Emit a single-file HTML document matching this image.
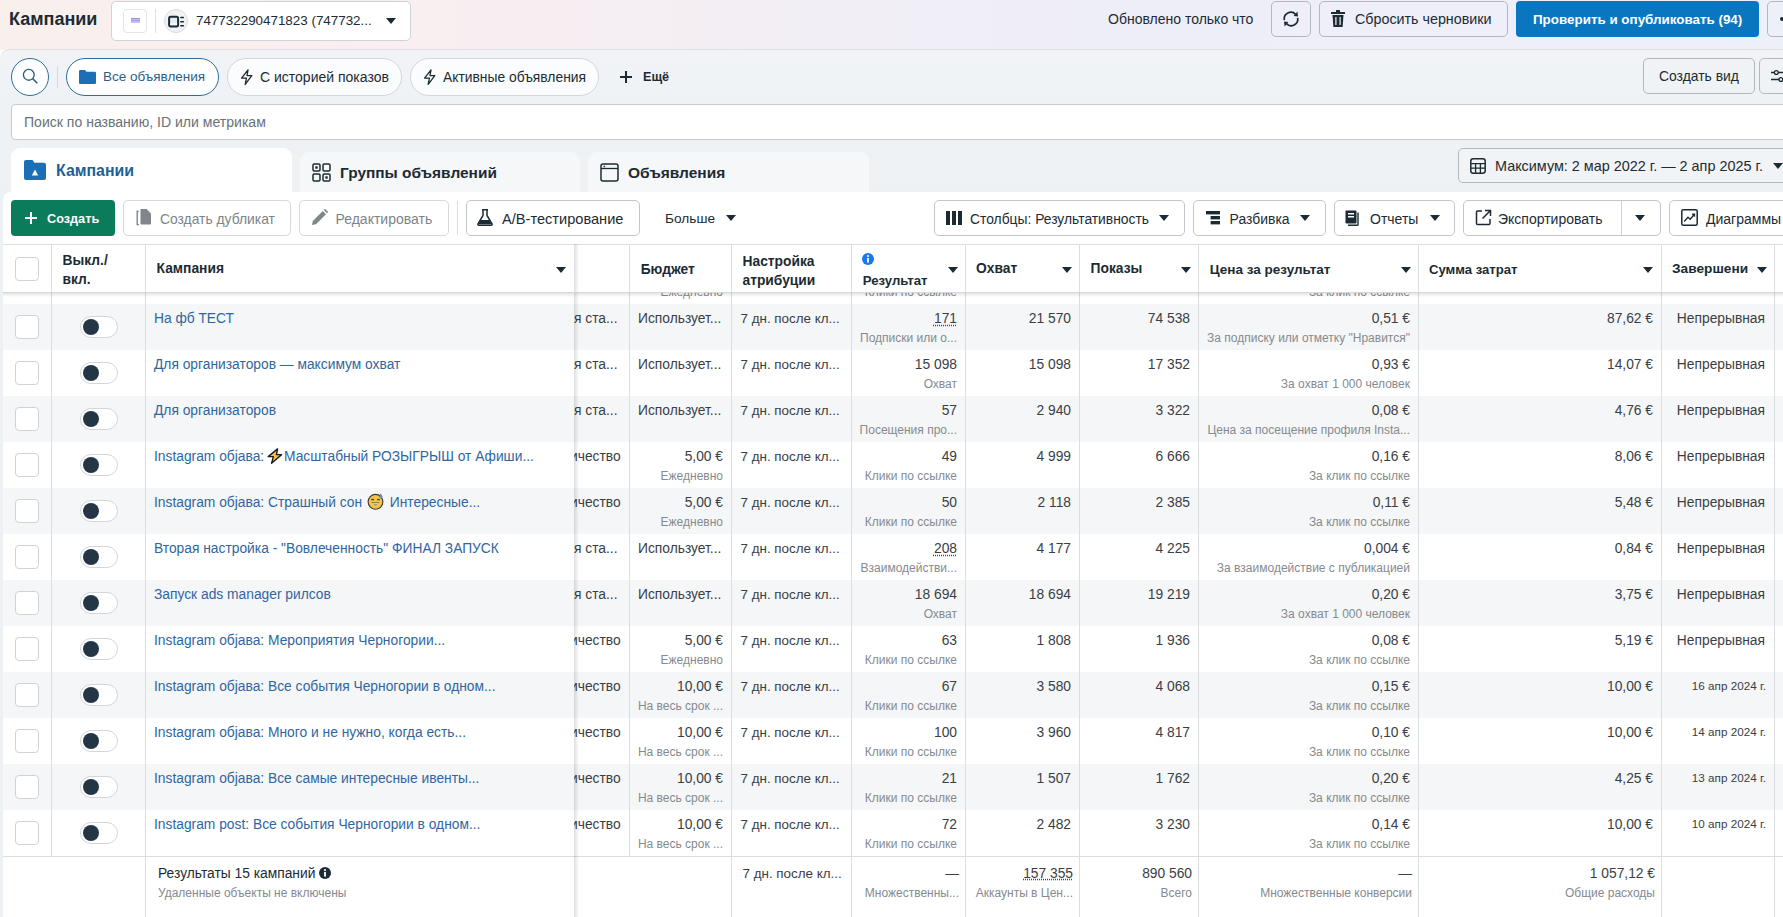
<!DOCTYPE html><html><head><meta charset="utf-8"><style>
*{box-sizing:border-box;margin:0;padding:0}
html,body{width:1783px;height:917px;overflow:hidden;background:#fff;font-family:"Liberation Sans",sans-serif;color:#1c2b33}
.abs{position:absolute}
.t{position:absolute;white-space:nowrap;line-height:16px}
.btn{position:absolute;border:1px solid #c2c6cc;border-radius:5px;background:#fff}
.tbtn{position:absolute;border:1px solid #b3b8bf;border-radius:5px;background:transparent}
.pill{position:absolute;border:1px solid #d3d7dc;border-radius:19px;background:#fbfcfd}
.caret{position:absolute;width:0;height:0;border-left:5px solid transparent;border-right:5px solid transparent;border-top:6px solid #1c2b33}
.cell{position:absolute;white-space:nowrap;overflow:hidden;font-size:14px;line-height:16px;color:#444950}
.sub{font-size:12px;color:#7b8287}
.vl{position:absolute;width:1px;background:#dadde1}
.hl{position:absolute;height:1px;background:#dadde1}
.lnk{color:#2f67a6}
</style></head><body>
<div class="abs" style="left:0;top:0;width:1783px;height:50px;background:linear-gradient(90deg,#f8f0ed 0%,#f9eef0 24%,#f2eef5 45%,#eeeef9 62%,#eef0f8 100%)"></div>
<div class="t" style="left:9px;top:9px;font-size:18px;line-height:20px;font-weight:700;color:#1c2b33">Кампании</div>
<div class="abs" style="left:111px;top:1px;width:300px;height:40px;border:1px solid #cfd3d8;border-radius:5px;background:#fff"></div>
<div class="abs" style="left:123px;top:9px;width:24px;height:24px;border:1px solid #e3e5e8;border-radius:4px;background:#fff"></div>
<div class="abs" style="left:130.6px;top:18px;width:9px;height:5.4px;background:#c7bdf3;border-top:1px solid #9a90d6"></div><div class="abs" style="left:130.6px;top:20.4px;width:9px;height:0.8px;background:#a79de0"></div>
<div class="abs" style="left:155px;top:9px;width:1px;height:24px;background:#dfe1e4"></div>
<div class="abs" style="left:164px;top:9px;width:23.5px;height:23.5px;border-radius:12px;background:#f0f2f5;border:1px solid #d9dce0"></div>
<svg class="abs" style="left:167px;top:15px" width="18" height="13" viewBox="0 0 18 13"><rect x="2.1" y="1.8" width="9" height="9.6" rx="1.6" fill="#e6ebf2" stroke="#1c2b33" stroke-width="2"/><rect x="3" y="8.6" width="7.2" height="1" fill="#fff"/><rect x="13.1" y="1.8" width="4" height="1.5" rx="0.7" fill="#1c2b33"/><rect x="13.1" y="5.9" width="4" height="1.5" rx="0.7" fill="#1c2b33"/><rect x="13.1" y="9.9" width="4" height="1.5" rx="0.7" fill="#1c2b33"/></svg>
<div class="t" style="left:196px;top:13px;font-size:13.4px;color:#1c2b33">747732290471823 (747732...</div>
<div class="caret" style="left:386px;top:18px"></div>
<div class="t" style="left:1108px;top:11px;font-size:14px;color:#1c2b33">Обновлено только что</div>
<div class="tbtn" style="left:1271px;top:1px;width:40px;height:36px"></div>
<svg class="abs" style="left:1282px;top:10px" width="18" height="18" viewBox="0 0 18 18"><path d="M2.4 10.2A6.6 6.6 0 0 1 13.6 4.3M15.6 7.8A6.6 6.6 0 0 1 4.4 13.7" fill="none" stroke="#1c2b33" stroke-width="1.7"/><path d="M11.6 6L16 6.6L15.4 1.6Z" fill="#1c2b33"/><path d="M6.4 12L2 11.4L2.6 16.4Z" fill="#1c2b33"/></svg>
<div class="tbtn" style="left:1319px;top:1px;width:189px;height:36px"></div>
<svg class="abs" style="left:1331px;top:10px" width="14" height="17" viewBox="0 0 14 17"><rect x="0" y="2" width="14" height="2" fill="#1c2b33"/><rect x="5" y="0" width="4" height="2" fill="#1c2b33"/><path d="M1.5 5H12.5L11.6 17H2.4Z" fill="#1c2b33"/><rect x="4.3" y="7" width="1.2" height="8" fill="#f5f6f8"/><rect x="8.5" y="7" width="1.2" height="8" fill="#f5f6f8"/></svg>
<div class="t" style="left:1355px;top:11px;font-size:14.3px;color:#1c2b33">Сбросить черновики</div>
<div class="abs" style="left:1516px;top:1px;width:243px;height:36px;border-radius:4px;background:#0a76c0"></div>
<div class="t" style="left:1533px;top:12px;font-size:13.4px;font-weight:700;color:#fff">Проверить и опубликовать (94)</div>
<div class="tbtn" style="left:1767px;top:1px;width:40px;height:36px"></div>
<div class="abs" style="left:1779.5px;top:17px;width:4px;height:4px;border-radius:2px;background:#1c2b33"></div>
<div class="abs" style="left:0;top:49px;width:1800px;height:900px;background:linear-gradient(180deg,#f1f3f7 0px,#eef2f5 60px,#eef1f4 200px);border-top:1px solid #dcdfe4;border-top-left-radius:10px"></div>
<div class="abs" style="left:11px;top:58px;width:38px;height:38px;border:1.5px solid #2b6e9e;border-radius:50%;background:#fff"></div>
<svg class="abs" style="left:21px;top:67px" width="19" height="19" viewBox="0 0 19 19"><circle cx="7.8" cy="7.8" r="5.4" fill="none" stroke="#2a5c80" stroke-width="1.35"/><path d="M11.8 11.8L15.8 15.8" stroke="#2a5c80" stroke-width="1.6" stroke-linecap="round"/></svg>
<div class="abs" style="left:57px;top:66px;width:1px;height:22px;background:#d6dade"></div>
<div class="pill" style="left:66px;top:58px;width:153px;height:38px;border:1.5px solid #2b6e9e;background:#fff"></div>
<svg class="abs" style="left:79px;top:70px" width="17" height="14" viewBox="0 0 17 14"><path d="M0 1.2Q0 0 1.2 0H6L7.6 1.8H15.8Q17 1.8 17 3V12.8Q17 14 15.8 14H1.2Q0 14 0 12.8Z" fill="#1a6fb5"/></svg>
<div class="t" style="left:103px;top:69px;font-size:13.5px;color:#2b5f8a">Все объявления</div>
<div class="pill" style="left:227px;top:58px;width:175px;height:38px"></div>
<svg class="abs" style="left:240px;top:69px" width="13" height="16" viewBox="0 0 13 16"><path d="M8 0.8L1.6 9.2H6.4L5.2 15.4L11.8 6.6H7L8 0.8Z" fill="none" stroke="#1c2b33" stroke-width="1.3" stroke-linejoin="round"/></svg>
<div class="t" style="left:260px;top:69px;font-size:14px;color:#1c2b33">С историей показов</div>
<div class="pill" style="left:410px;top:58px;width:189px;height:38px"></div>
<svg class="abs" style="left:423px;top:69px" width="13" height="16" viewBox="0 0 13 16"><path d="M8 0.8L1.6 9.2H6.4L5.2 15.4L11.8 6.6H7L8 0.8Z" fill="none" stroke="#1c2b33" stroke-width="1.3" stroke-linejoin="round"/></svg>
<div class="t" style="left:443px;top:69px;font-size:13.85px;color:#1c2b33">Активные объявления</div>
<div class="abs" style="left:620px;top:76px;width:12px;height:1.6px;background:#1c2b33"></div><div class="abs" style="left:625.2px;top:70.8px;width:1.6px;height:12px;background:#1c2b33"></div>
<div class="t" style="left:643px;top:69px;font-size:12.6px;font-weight:700;color:#1c2b33">Ещё</div>
<div class="tbtn" style="left:1643px;top:58px;width:112px;height:36px"></div>
<div class="t" style="left:1659px;top:68px;font-size:13.9px;color:#1c2b33">Создать вид</div>
<div class="tbtn" style="left:1759px;top:58px;width:40px;height:36px"></div>
<svg class="abs" style="left:1770px;top:67px" width="16" height="16" viewBox="0 0 16 16"><path d="M1 5.5H4.4M8.2 5.5H16M1 12.5H9M12.8 12.5H16" stroke="#1c2b33" stroke-width="1.3"/><circle cx="6.3" cy="5.5" r="1.9" fill="none" stroke="#1c2b33" stroke-width="1.3"/><circle cx="10.9" cy="12.5" r="1.9" fill="none" stroke="#1c2b33" stroke-width="1.3"/></svg>
<div class="abs" style="left:11px;top:104px;width:1790px;height:36px;border:1px solid #c7cbd0;border-radius:4px;background:#fff"></div>
<div class="t" style="left:24px;top:114px;font-size:14.05px;color:#6a7177">Поиск по названию, ID или метрикам</div>
<div class="abs" style="left:11px;top:148px;width:281px;height:50px;border-radius:9px 9px 0 0;background:#fff"></div>
<svg class="abs" style="left:24px;top:160px" width="22" height="20" viewBox="0 0 22 20"><path d="M0 2Q0 0 2 0H8.5L10.5 2.8H20Q22 2.8 22 4.8V18Q22 20 20 20H2Q0 20 0 18Z" fill="#1a6fb5"/><path d="M11 9.5L14.2 15.5H7.8Z" fill="#fff"/></svg>
<div class="t" style="left:56px;top:162px;font-size:15.9px;line-height:18px;font-weight:700;color:#1f5f96">Кампании</div>
<div class="abs" style="left:300px;top:152px;width:280px;height:46px;border-radius:9px 9px 0 0;background:#f6f7f9"></div>
<svg class="abs" style="left:312px;top:163px" width="19" height="19" viewBox="0 0 19 19"><rect x="1" y="1" width="7" height="7" rx="1.2" fill="none" stroke="#1c2b33" stroke-width="1.5"/><rect x="11" y="1" width="7" height="7" rx="1.2" fill="none" stroke="#1c2b33" stroke-width="1.5"/><rect x="1" y="11" width="7" height="7" rx="1.2" fill="none" stroke="#1c2b33" stroke-width="1.5"/><rect x="11" y="11" width="7" height="7" rx="1.2" fill="none" stroke="#1c2b33" stroke-width="1.5"/><rect x="3.3" y="3.3" width="2.4" height="2.4" fill="#1c2b33"/><rect x="13.3" y="13.3" width="2.4" height="2.4" fill="#1c2b33"/></svg>
<div class="t" style="left:340px;top:164px;font-size:15.45px;line-height:18px;font-weight:700;color:#1c2b33">Группы объявлений</div>
<div class="abs" style="left:588px;top:152px;width:281px;height:46px;border-radius:9px 9px 0 0;background:#f6f7f9"></div>
<svg class="abs" style="left:600px;top:163px" width="19" height="19" viewBox="0 0 19 19"><rect x="1" y="1" width="17" height="17" rx="2" fill="none" stroke="#1c2b33" stroke-width="1.5"/><path d="M1 5.5H18" stroke="#1c2b33" stroke-width="1.3"/><rect x="3.5" y="2.8" width="1.6" height="1.4" fill="#1c2b33"/></svg>
<div class="t" style="left:628px;top:164px;font-size:15.5px;line-height:18px;font-weight:700;color:#1c2b33">Объявления</div>
<div class="abs" style="left:1458px;top:148px;width:340px;height:35px;border:1px solid #b3b8bf;border-radius:5px;background:#f1f3f6"></div>
<svg class="abs" style="left:1470px;top:158px" width="16" height="16" viewBox="0 0 16 16"><rect x="0.8" y="0.8" width="14.4" height="14.4" rx="2.4" fill="none" stroke="#1c2b33" stroke-width="1.5"/><path d="M0.8 5.6H15.2M0.8 10.2H15.2M5.6 5.6V15M10.4 5.6V15" stroke="#1c2b33" stroke-width="1.3"/></svg>
<div class="t" style="left:1495px;top:158px;font-size:14.4px;color:#1c2b33">Максимум: 2 мар 2022 г. — 2 апр 2025 г.</div>
<div class="caret" style="left:1773px;top:163px"></div>
<div class="abs" style="left:3px;top:192px;width:1800px;height:730px;background:#fff;border-top-left-radius:8px"></div>
<div class="abs" style="left:11px;top:200px;width:104px;height:36px;border-radius:4px;background:#0b7c5b"></div>
<div class="abs" style="left:25px;top:217px;width:12px;height:1.8px;background:#fff"></div><div class="abs" style="left:30.1px;top:212px;width:1.8px;height:12px;background:#fff"></div>
<div class="t" style="left:47px;top:210.5px;font-size:12.7px;font-weight:700;color:#fff">Создать</div>
<div class="btn" style="left:123px;top:200px;width:168px;height:36px;border-color:#d5d9de"></div>
<svg class="abs" style="left:135px;top:209px" width="18" height="17" viewBox="0 0 18 17"><path d="M3.6 2.2H2.2V15.6H4" fill="none" stroke="#80868b" stroke-width="1.4"/><path d="M5.5 0H11.5L16 4.5V14.5Q16 15.5 15 15.5H6.5Q5.5 15.5 5.5 14.5Z" fill="#80868b"/></svg>
<div class="t" style="left:160px;top:210.5px;font-size:13.86px;color:#7d8489">Создать дубликат</div>
<div class="btn" style="left:299px;top:200px;width:150px;height:36px;border-color:#d5d9de"></div>
<svg class="abs" style="left:311px;top:209px" width="17" height="17" viewBox="0 0 17 17"><path d="M1 16L1.8 12L11.8 2L15 5.2L5 15.2Z" fill="#80868b"/><path d="M12.8 1L14 -0.2L17.2 3L16 4.2Z" fill="#80868b"/></svg>
<div class="t" style="left:335.5px;top:210.5px;font-size:14px;color:#7d8489">Редактировать</div>
<div class="abs" style="left:457px;top:201px;width:1px;height:34px;background:#dadde1"></div>
<div class="btn" style="left:466px;top:200px;width:174px;height:36px"></div>
<svg class="abs" style="left:477px;top:209px" width="16" height="17" viewBox="0 0 16 17"><path d="M5 0.8H11M6 1V6.5L1 14.8Q0.5 16.2 2 16.2H14Q15.5 16.2 15 14.8L10 6.5V1" fill="none" stroke="#1c2b33" stroke-width="1.5"/><path d="M3.6 11H12.4L14.6 15.2H1.4Z" fill="#1c2b33"/></svg>
<div class="t" style="left:502px;top:210.5px;font-size:14.6px;color:#1c2b33">A/B-тестирование</div>
<div class="t" style="left:665px;top:210.5px;font-size:13.7px;color:#1c2b33">Больше</div>
<div class="caret" style="left:726px;top:215px"></div>
<div class="btn" style="left:934px;top:200px;width:251px;height:36px"></div>
<div class="t" style="left:970px;top:210.5px;font-size:13.85px;color:#1c2b33">Столбцы: Результативность</div>
<div class="caret" style="left:1159px;top:215px"></div>
<svg class="abs" style="left:946px;top:211px" width="16" height="14" viewBox="0 0 16 14"><rect x="0" y="0" width="4" height="14" fill="#1c2b33"/><rect x="6" y="0" width="4" height="14" fill="#1c2b33"/><rect x="12" y="0" width="4" height="14" fill="#1c2b33"/></svg>
<div class="btn" style="left:1193px;top:200px;width:133px;height:36px"></div>
<div class="t" style="left:1229.6px;top:210.5px;font-size:13.95px;color:#1c2b33">Разбивка</div>
<div class="caret" style="left:1300px;top:215px"></div>
<svg class="abs" style="left:1206px;top:211px" width="15" height="14" viewBox="0 0 15 14"><rect x="0" y="0" width="14" height="3.4" fill="#1c2b33"/><rect x="4.6" y="5" width="9.4" height="3.4" fill="#1c2b33"/><rect x="4.6" y="10" width="9.4" height="3.4" fill="#1c2b33"/></svg>
<div class="btn" style="left:1334px;top:200px;width:121px;height:36px"></div>
<div class="t" style="left:1370px;top:210.5px;font-size:14px;color:#1c2b33">Отчеты</div>
<div class="caret" style="left:1430px;top:215px"></div>
<svg class="abs" style="left:1345px;top:210px" width="16" height="16" viewBox="0 0 16 16"><rect x="0.5" y="0.5" width="11" height="13" rx="1" fill="#1c2b33"/><rect x="3" y="3" width="6" height="1.5" fill="#fff"/><rect x="3" y="6" width="6" height="1.5" fill="#fff"/><path d="M13 2.5V14.5Q13 15.3 12.2 15.3H3" fill="none" stroke="#1c2b33" stroke-width="1.4"/></svg>
<div class="btn" style="left:1463px;top:200px;width:198px;height:36px"></div>
<div class="t" style="left:1498px;top:210.5px;font-size:14px;color:#1c2b33">Экспортировать</div>
<div class="abs" style="left:1621px;top:201px;width:1px;height:34px;background:#cbd2d9"></div>
<div class="caret" style="left:1635px;top:215px"></div>
<svg class="abs" style="left:1475px;top:209px" width="17" height="17" viewBox="0 0 17 17"><path d="M7 2H2.5Q1.5 2 1.5 3V14.5Q1.5 15.5 2.5 15.5H14Q15 15.5 15 14.5V10" fill="none" stroke="#1c2b33" stroke-width="1.5"/><path d="M7.5 9.5L15 2M10 1.5H15.5V7" fill="none" stroke="#1c2b33" stroke-width="1.5"/></svg>
<div class="btn" style="left:1669px;top:200px;width:140px;height:36px"></div>
<div class="t" style="left:1706px;top:210.5px;font-size:14px;color:#1c2b33">Диаграммы</div>
<svg class="abs" style="left:1681px;top:209px" width="17" height="17" viewBox="0 0 17 17"><rect x="0.8" y="0.8" width="15.4" height="15.4" rx="1.5" fill="none" stroke="#1c2b33" stroke-width="1.5"/><path d="M3.2 12.5L7 8.2L9.2 10.2L13.2 5.5M11 5.2H13.5V7.7" fill="none" stroke="#1c2b33" stroke-width="1.3"/></svg>
<div class="abs" style="left:3px;top:257.9px;width:1800px;height:46px;background:#fff"></div>
<div class="abs" style="left:3px;top:303.9px;width:1800px;height:46px;background:#f5f6f7"></div>
<div class="abs" style="left:3px;top:349.9px;width:1800px;height:46px;background:#fff"></div>
<div class="abs" style="left:3px;top:395.9px;width:1800px;height:46px;background:#f5f6f7"></div>
<div class="abs" style="left:3px;top:441.9px;width:1800px;height:46px;background:#fff"></div>
<div class="abs" style="left:3px;top:487.9px;width:1800px;height:46px;background:#f5f6f7"></div>
<div class="abs" style="left:3px;top:533.9px;width:1800px;height:46px;background:#fff"></div>
<div class="abs" style="left:3px;top:579.9px;width:1800px;height:46px;background:#f5f6f7"></div>
<div class="abs" style="left:3px;top:625.9px;width:1800px;height:46px;background:#fff"></div>
<div class="abs" style="left:3px;top:671.9px;width:1800px;height:46px;background:#f5f6f7"></div>
<div class="abs" style="left:3px;top:717.9px;width:1800px;height:46px;background:#fff"></div>
<div class="abs" style="left:3px;top:763.9px;width:1800px;height:46px;background:#f5f6f7"></div>
<div class="abs" style="left:3px;top:809.9px;width:1800px;height:46px;background:#fff"></div>
<div class="t" style="left:570px;top:265.34px;font-size:13.8px;color:#3a3e44;font-weight:400;">ичество</div>
<div class="t" style="right:1060px;top:265.34px;font-size:13.8px;color:#3a3e44;font-weight:400;">5,00 €</div>
<div class="t" style="right:1060px;top:284.33px;font-size:12px;color:#858a8f;font-weight:400;">Ежедневно</div>
<div class="t" style="left:740.5px;top:265.47px;font-size:13.4px;color:#3a3e44;font-weight:400;">7 дн. после кл...</div>
<div class="t" style="right:826px;top:265.34px;font-size:13.8px;color:#3a3e44;font-weight:400;">49</div>
<div class="t" style="right:826px;top:284.33px;font-size:12px;color:#858a8f;font-weight:400;">Клики по ссылке</div>
<div class="t" style="right:712px;top:265.34px;font-size:13.8px;color:#3a3e44;font-weight:400;"></div>
<div class="t" style="right:593px;top:265.34px;font-size:13.8px;color:#3a3e44;font-weight:400;"></div>
<div class="t" style="right:373px;top:265.34px;font-size:13.8px;color:#3a3e44;font-weight:400;"></div>
<div class="t" style="right:373px;top:284.33px;font-size:12px;color:#858a8f;font-weight:400;">За клик по ссылке</div>
<div class="t" style="right:130px;top:265.34px;font-size:13.8px;color:#3a3e44;font-weight:400;"></div>
<div class="t" style="right:18px;top:265.34px;font-size:13.8px;color:#3a3e44;font-weight:400;"></div>
<div class="t" style="left:574px;top:311.34px;font-size:13.8px;color:#3a3e44;font-weight:400;">я ста...</div>
<div class="t" style="left:638px;top:311.34px;font-size:13.8px;color:#3a3e44;font-weight:400;">Использует...</div>
<div class="t" style="left:740.5px;top:311.47px;font-size:13.4px;color:#3a3e44;font-weight:400;">7 дн. после кл...</div>
<div class="t" style="right:826px;top:311.34px;font-size:13.8px;color:#3a3e44;font-weight:400;text-decoration:underline dotted #444950;text-underline-offset:1px">171</div>
<div class="t" style="right:826px;top:330.33px;font-size:12px;color:#858a8f;font-weight:400;">Подписки или о...</div>
<div class="t" style="right:712px;top:311.34px;font-size:13.8px;color:#3a3e44;font-weight:400;">21 570</div>
<div class="t" style="right:593px;top:311.34px;font-size:13.8px;color:#3a3e44;font-weight:400;">74 538</div>
<div class="t" style="right:373px;top:311.34px;font-size:13.8px;color:#3a3e44;font-weight:400;">0,51 €</div>
<div class="t" style="right:373px;top:330.33px;font-size:12px;color:#858a8f;font-weight:400;">За подписку или отметку "Нравится"</div>
<div class="t" style="right:130px;top:311.34px;font-size:13.8px;color:#3a3e44;font-weight:400;">87,62 €</div>
<div class="t" style="right:18px;top:311.34px;font-size:13.8px;color:#3a3e44;font-weight:400;">Непрерывная</div>
<div class="t" style="left:574px;top:357.34px;font-size:13.8px;color:#3a3e44;font-weight:400;">я ста...</div>
<div class="t" style="left:638px;top:357.34px;font-size:13.8px;color:#3a3e44;font-weight:400;">Использует...</div>
<div class="t" style="left:740.5px;top:357.47px;font-size:13.4px;color:#3a3e44;font-weight:400;">7 дн. после кл...</div>
<div class="t" style="right:826px;top:357.34px;font-size:13.8px;color:#3a3e44;font-weight:400;">15 098</div>
<div class="t" style="right:826px;top:376.33px;font-size:12px;color:#858a8f;font-weight:400;">Охват</div>
<div class="t" style="right:712px;top:357.34px;font-size:13.8px;color:#3a3e44;font-weight:400;">15 098</div>
<div class="t" style="right:593px;top:357.34px;font-size:13.8px;color:#3a3e44;font-weight:400;">17 352</div>
<div class="t" style="right:373px;top:357.34px;font-size:13.8px;color:#3a3e44;font-weight:400;">0,93 €</div>
<div class="t" style="right:373px;top:376.33px;font-size:12px;color:#858a8f;font-weight:400;">За охват 1 000 человек</div>
<div class="t" style="right:130px;top:357.34px;font-size:13.8px;color:#3a3e44;font-weight:400;">14,07 €</div>
<div class="t" style="right:18px;top:357.34px;font-size:13.8px;color:#3a3e44;font-weight:400;">Непрерывная</div>
<div class="t" style="left:574px;top:403.34px;font-size:13.8px;color:#3a3e44;font-weight:400;">я ста...</div>
<div class="t" style="left:638px;top:403.34px;font-size:13.8px;color:#3a3e44;font-weight:400;">Использует...</div>
<div class="t" style="left:740.5px;top:403.47px;font-size:13.4px;color:#3a3e44;font-weight:400;">7 дн. после кл...</div>
<div class="t" style="right:826px;top:403.34px;font-size:13.8px;color:#3a3e44;font-weight:400;">57</div>
<div class="t" style="right:826px;top:422.33px;font-size:12px;color:#858a8f;font-weight:400;">Посещения про...</div>
<div class="t" style="right:712px;top:403.34px;font-size:13.8px;color:#3a3e44;font-weight:400;">2 940</div>
<div class="t" style="right:593px;top:403.34px;font-size:13.8px;color:#3a3e44;font-weight:400;">3 322</div>
<div class="t" style="right:373px;top:403.34px;font-size:13.8px;color:#3a3e44;font-weight:400;">0,08 €</div>
<div class="t" style="right:373px;top:422.33px;font-size:12px;color:#858a8f;font-weight:400;">Цена за посещение профиля Insta...</div>
<div class="t" style="right:130px;top:403.34px;font-size:13.8px;color:#3a3e44;font-weight:400;">4,76 €</div>
<div class="t" style="right:18px;top:403.34px;font-size:13.8px;color:#3a3e44;font-weight:400;">Непрерывная</div>
<div class="t" style="left:570px;top:449.34px;font-size:13.8px;color:#3a3e44;font-weight:400;">ичество</div>
<div class="t" style="right:1060px;top:449.34px;font-size:13.8px;color:#3a3e44;font-weight:400;">5,00 €</div>
<div class="t" style="right:1060px;top:468.33px;font-size:12px;color:#858a8f;font-weight:400;">Ежедневно</div>
<div class="t" style="left:740.5px;top:449.47px;font-size:13.4px;color:#3a3e44;font-weight:400;">7 дн. после кл...</div>
<div class="t" style="right:826px;top:449.34px;font-size:13.8px;color:#3a3e44;font-weight:400;">49</div>
<div class="t" style="right:826px;top:468.33px;font-size:12px;color:#858a8f;font-weight:400;">Клики по ссылке</div>
<div class="t" style="right:712px;top:449.34px;font-size:13.8px;color:#3a3e44;font-weight:400;">4 999</div>
<div class="t" style="right:593px;top:449.34px;font-size:13.8px;color:#3a3e44;font-weight:400;">6 666</div>
<div class="t" style="right:373px;top:449.34px;font-size:13.8px;color:#3a3e44;font-weight:400;">0,16 €</div>
<div class="t" style="right:373px;top:468.33px;font-size:12px;color:#858a8f;font-weight:400;">За клик по ссылке</div>
<div class="t" style="right:130px;top:449.34px;font-size:13.8px;color:#3a3e44;font-weight:400;">8,06 €</div>
<div class="t" style="right:18px;top:449.34px;font-size:13.8px;color:#3a3e44;font-weight:400;">Непрерывная</div>
<div class="t" style="left:570px;top:495.34px;font-size:13.8px;color:#3a3e44;font-weight:400;">ичество</div>
<div class="t" style="right:1060px;top:495.34px;font-size:13.8px;color:#3a3e44;font-weight:400;">5,00 €</div>
<div class="t" style="right:1060px;top:514.33px;font-size:12px;color:#858a8f;font-weight:400;">Ежедневно</div>
<div class="t" style="left:740.5px;top:495.47px;font-size:13.4px;color:#3a3e44;font-weight:400;">7 дн. после кл...</div>
<div class="t" style="right:826px;top:495.34px;font-size:13.8px;color:#3a3e44;font-weight:400;">50</div>
<div class="t" style="right:826px;top:514.33px;font-size:12px;color:#858a8f;font-weight:400;">Клики по ссылке</div>
<div class="t" style="right:712px;top:495.34px;font-size:13.8px;color:#3a3e44;font-weight:400;">2 118</div>
<div class="t" style="right:593px;top:495.34px;font-size:13.8px;color:#3a3e44;font-weight:400;">2 385</div>
<div class="t" style="right:373px;top:495.34px;font-size:13.8px;color:#3a3e44;font-weight:400;">0,11 €</div>
<div class="t" style="right:373px;top:514.33px;font-size:12px;color:#858a8f;font-weight:400;">За клик по ссылке</div>
<div class="t" style="right:130px;top:495.34px;font-size:13.8px;color:#3a3e44;font-weight:400;">5,48 €</div>
<div class="t" style="right:18px;top:495.34px;font-size:13.8px;color:#3a3e44;font-weight:400;">Непрерывная</div>
<div class="t" style="left:574px;top:541.34px;font-size:13.8px;color:#3a3e44;font-weight:400;">я ста...</div>
<div class="t" style="left:638px;top:541.34px;font-size:13.8px;color:#3a3e44;font-weight:400;">Использует...</div>
<div class="t" style="left:740.5px;top:541.47px;font-size:13.4px;color:#3a3e44;font-weight:400;">7 дн. после кл...</div>
<div class="t" style="right:826px;top:541.34px;font-size:13.8px;color:#3a3e44;font-weight:400;text-decoration:underline dotted #444950;text-underline-offset:1px">208</div>
<div class="t" style="right:826px;top:560.33px;font-size:12px;color:#858a8f;font-weight:400;">Взаимодействи...</div>
<div class="t" style="right:712px;top:541.34px;font-size:13.8px;color:#3a3e44;font-weight:400;">4 177</div>
<div class="t" style="right:593px;top:541.34px;font-size:13.8px;color:#3a3e44;font-weight:400;">4 225</div>
<div class="t" style="right:373px;top:541.34px;font-size:13.8px;color:#3a3e44;font-weight:400;">0,004 €</div>
<div class="t" style="right:373px;top:560.33px;font-size:12px;color:#858a8f;font-weight:400;">За взаимодействие с публикацией</div>
<div class="t" style="right:130px;top:541.34px;font-size:13.8px;color:#3a3e44;font-weight:400;">0,84 €</div>
<div class="t" style="right:18px;top:541.34px;font-size:13.8px;color:#3a3e44;font-weight:400;">Непрерывная</div>
<div class="t" style="left:574px;top:587.34px;font-size:13.8px;color:#3a3e44;font-weight:400;">я ста...</div>
<div class="t" style="left:638px;top:587.34px;font-size:13.8px;color:#3a3e44;font-weight:400;">Использует...</div>
<div class="t" style="left:740.5px;top:587.47px;font-size:13.4px;color:#3a3e44;font-weight:400;">7 дн. после кл...</div>
<div class="t" style="right:826px;top:587.34px;font-size:13.8px;color:#3a3e44;font-weight:400;">18 694</div>
<div class="t" style="right:826px;top:606.33px;font-size:12px;color:#858a8f;font-weight:400;">Охват</div>
<div class="t" style="right:712px;top:587.34px;font-size:13.8px;color:#3a3e44;font-weight:400;">18 694</div>
<div class="t" style="right:593px;top:587.34px;font-size:13.8px;color:#3a3e44;font-weight:400;">19 219</div>
<div class="t" style="right:373px;top:587.34px;font-size:13.8px;color:#3a3e44;font-weight:400;">0,20 €</div>
<div class="t" style="right:373px;top:606.33px;font-size:12px;color:#858a8f;font-weight:400;">За охват 1 000 человек</div>
<div class="t" style="right:130px;top:587.34px;font-size:13.8px;color:#3a3e44;font-weight:400;">3,75 €</div>
<div class="t" style="right:18px;top:587.34px;font-size:13.8px;color:#3a3e44;font-weight:400;">Непрерывная</div>
<div class="t" style="left:570px;top:633.34px;font-size:13.8px;color:#3a3e44;font-weight:400;">ичество</div>
<div class="t" style="right:1060px;top:633.34px;font-size:13.8px;color:#3a3e44;font-weight:400;">5,00 €</div>
<div class="t" style="right:1060px;top:652.33px;font-size:12px;color:#858a8f;font-weight:400;">Ежедневно</div>
<div class="t" style="left:740.5px;top:633.47px;font-size:13.4px;color:#3a3e44;font-weight:400;">7 дн. после кл...</div>
<div class="t" style="right:826px;top:633.34px;font-size:13.8px;color:#3a3e44;font-weight:400;">63</div>
<div class="t" style="right:826px;top:652.33px;font-size:12px;color:#858a8f;font-weight:400;">Клики по ссылке</div>
<div class="t" style="right:712px;top:633.34px;font-size:13.8px;color:#3a3e44;font-weight:400;">1 808</div>
<div class="t" style="right:593px;top:633.34px;font-size:13.8px;color:#3a3e44;font-weight:400;">1 936</div>
<div class="t" style="right:373px;top:633.34px;font-size:13.8px;color:#3a3e44;font-weight:400;">0,08 €</div>
<div class="t" style="right:373px;top:652.33px;font-size:12px;color:#858a8f;font-weight:400;">За клик по ссылке</div>
<div class="t" style="right:130px;top:633.34px;font-size:13.8px;color:#3a3e44;font-weight:400;">5,19 €</div>
<div class="t" style="right:18px;top:633.34px;font-size:13.8px;color:#3a3e44;font-weight:400;">Непрерывная</div>
<div class="t" style="left:570px;top:679.34px;font-size:13.8px;color:#3a3e44;font-weight:400;">ичество</div>
<div class="t" style="right:1060px;top:679.34px;font-size:13.8px;color:#3a3e44;font-weight:400;">10,00 €</div>
<div class="t" style="right:1060px;top:698.33px;font-size:12px;color:#858a8f;font-weight:400;">На весь срок ...</div>
<div class="t" style="left:740.5px;top:679.47px;font-size:13.4px;color:#3a3e44;font-weight:400;">7 дн. после кл...</div>
<div class="t" style="right:826px;top:679.34px;font-size:13.8px;color:#3a3e44;font-weight:400;">67</div>
<div class="t" style="right:826px;top:698.33px;font-size:12px;color:#858a8f;font-weight:400;">Клики по ссылке</div>
<div class="t" style="right:712px;top:679.34px;font-size:13.8px;color:#3a3e44;font-weight:400;">3 580</div>
<div class="t" style="right:593px;top:679.34px;font-size:13.8px;color:#3a3e44;font-weight:400;">4 068</div>
<div class="t" style="right:373px;top:679.34px;font-size:13.8px;color:#3a3e44;font-weight:400;">0,15 €</div>
<div class="t" style="right:373px;top:698.33px;font-size:12px;color:#858a8f;font-weight:400;">За клик по ссылке</div>
<div class="t" style="right:130px;top:679.34px;font-size:13.8px;color:#3a3e44;font-weight:400;">10,00 €</div>
<div class="t" style="right:17px;top:677.73px;font-size:11.7px;color:#3a3e44;font-weight:400;">16 апр 2024 г.</div>
<div class="t" style="left:570px;top:725.34px;font-size:13.8px;color:#3a3e44;font-weight:400;">ичество</div>
<div class="t" style="right:1060px;top:725.34px;font-size:13.8px;color:#3a3e44;font-weight:400;">10,00 €</div>
<div class="t" style="right:1060px;top:744.33px;font-size:12px;color:#858a8f;font-weight:400;">На весь срок ...</div>
<div class="t" style="left:740.5px;top:725.47px;font-size:13.4px;color:#3a3e44;font-weight:400;">7 дн. после кл...</div>
<div class="t" style="right:826px;top:725.34px;font-size:13.8px;color:#3a3e44;font-weight:400;">100</div>
<div class="t" style="right:826px;top:744.33px;font-size:12px;color:#858a8f;font-weight:400;">Клики по ссылке</div>
<div class="t" style="right:712px;top:725.34px;font-size:13.8px;color:#3a3e44;font-weight:400;">3 960</div>
<div class="t" style="right:593px;top:725.34px;font-size:13.8px;color:#3a3e44;font-weight:400;">4 817</div>
<div class="t" style="right:373px;top:725.34px;font-size:13.8px;color:#3a3e44;font-weight:400;">0,10 €</div>
<div class="t" style="right:373px;top:744.33px;font-size:12px;color:#858a8f;font-weight:400;">За клик по ссылке</div>
<div class="t" style="right:130px;top:725.34px;font-size:13.8px;color:#3a3e44;font-weight:400;">10,00 €</div>
<div class="t" style="right:17px;top:723.73px;font-size:11.7px;color:#3a3e44;font-weight:400;">14 апр 2024 г.</div>
<div class="t" style="left:570px;top:771.34px;font-size:13.8px;color:#3a3e44;font-weight:400;">ичество</div>
<div class="t" style="right:1060px;top:771.34px;font-size:13.8px;color:#3a3e44;font-weight:400;">10,00 €</div>
<div class="t" style="right:1060px;top:790.33px;font-size:12px;color:#858a8f;font-weight:400;">На весь срок ...</div>
<div class="t" style="left:740.5px;top:771.47px;font-size:13.4px;color:#3a3e44;font-weight:400;">7 дн. после кл...</div>
<div class="t" style="right:826px;top:771.34px;font-size:13.8px;color:#3a3e44;font-weight:400;">21</div>
<div class="t" style="right:826px;top:790.33px;font-size:12px;color:#858a8f;font-weight:400;">Клики по ссылке</div>
<div class="t" style="right:712px;top:771.34px;font-size:13.8px;color:#3a3e44;font-weight:400;">1 507</div>
<div class="t" style="right:593px;top:771.34px;font-size:13.8px;color:#3a3e44;font-weight:400;">1 762</div>
<div class="t" style="right:373px;top:771.34px;font-size:13.8px;color:#3a3e44;font-weight:400;">0,20 €</div>
<div class="t" style="right:373px;top:790.33px;font-size:12px;color:#858a8f;font-weight:400;">За клик по ссылке</div>
<div class="t" style="right:130px;top:771.34px;font-size:13.8px;color:#3a3e44;font-weight:400;">4,25 €</div>
<div class="t" style="right:17px;top:769.73px;font-size:11.7px;color:#3a3e44;font-weight:400;">13 апр 2024 г.</div>
<div class="t" style="left:570px;top:817.34px;font-size:13.8px;color:#3a3e44;font-weight:400;">ичество</div>
<div class="t" style="right:1060px;top:817.34px;font-size:13.8px;color:#3a3e44;font-weight:400;">10,00 €</div>
<div class="t" style="right:1060px;top:836.33px;font-size:12px;color:#858a8f;font-weight:400;">На весь срок ...</div>
<div class="t" style="left:740.5px;top:817.47px;font-size:13.4px;color:#3a3e44;font-weight:400;">7 дн. после кл...</div>
<div class="t" style="right:826px;top:817.34px;font-size:13.8px;color:#3a3e44;font-weight:400;">72</div>
<div class="t" style="right:826px;top:836.33px;font-size:12px;color:#858a8f;font-weight:400;">Клики по ссылке</div>
<div class="t" style="right:712px;top:817.34px;font-size:13.8px;color:#3a3e44;font-weight:400;">2 482</div>
<div class="t" style="right:593px;top:817.34px;font-size:13.8px;color:#3a3e44;font-weight:400;">3 230</div>
<div class="t" style="right:373px;top:817.34px;font-size:13.8px;color:#3a3e44;font-weight:400;">0,14 €</div>
<div class="t" style="right:373px;top:836.33px;font-size:12px;color:#858a8f;font-weight:400;">За клик по ссылке</div>
<div class="t" style="right:130px;top:817.34px;font-size:13.8px;color:#3a3e44;font-weight:400;">10,00 €</div>
<div class="t" style="right:17px;top:815.73px;font-size:11.7px;color:#3a3e44;font-weight:400;">10 апр 2024 г.</div>
<div class="abs" style="left:3px;top:856px;width:1800px;height:70px;background:#fff"></div>
<div class="hl" style="left:3px;top:856px;width:1800px"></div>
<div class="t" style="left:742.5px;top:865.77px;font-size:13.4px;color:#3a3e44;font-weight:400;">7 дн. после кл...</div>
<div class="t" style="right:824px;top:865.64px;font-size:13.8px;color:#3a3e44;font-weight:400;">—</div>
<div class="t" style="right:824px;top:885.23px;font-size:12px;color:#858a8f;font-weight:400;">Множественны...</div>
<div class="t" style="right:710px;top:865.64px;font-size:13.8px;color:#3a3e44;font-weight:400;text-decoration:underline dotted #444950;text-underline-offset:1px">157 355</div>
<div class="t" style="right:710px;top:885.23px;font-size:12px;color:#858a8f;font-weight:400;">Аккаунты в Цен...</div>
<div class="t" style="right:591px;top:865.64px;font-size:13.8px;color:#3a3e44;font-weight:400;">890 560</div>
<div class="t" style="right:591px;top:885.23px;font-size:12px;color:#858a8f;font-weight:400;">Всего</div>
<div class="t" style="right:371px;top:865.64px;font-size:13.8px;color:#3a3e44;font-weight:400;">—</div>
<div class="t" style="right:371px;top:885.23px;font-size:12px;color:#858a8f;font-weight:400;">Множественные конверсии</div>
<div class="t" style="right:128px;top:865.64px;font-size:13.8px;color:#3a3e44;font-weight:400;">1 057,12 €</div>
<div class="t" style="right:128px;top:885.23px;font-size:12px;color:#858a8f;font-weight:400;">Общие расходы</div>
<div class="vl" style="left:629px;top:244px;height:612px"></div>
<div class="vl" style="left:731px;top:244px;height:673px"></div>
<div class="vl" style="left:851px;top:244px;height:673px"></div>
<div class="vl" style="left:965px;top:244px;height:673px"></div>
<div class="vl" style="left:1079px;top:244px;height:673px"></div>
<div class="vl" style="left:1198px;top:244px;height:673px"></div>
<div class="vl" style="left:1418px;top:244px;height:673px"></div>
<div class="vl" style="left:1661px;top:244px;height:673px"></div>
<div class="vl" style="left:1774px;top:244px;height:673px"></div>
<div class="abs" style="left:3px;top:257.9px;width:571px;height:46px;background:#fff"></div>
<div class="abs" style="left:3px;top:303.9px;width:571px;height:46px;background:#f5f6f7"></div>
<div class="abs" style="left:3px;top:349.9px;width:571px;height:46px;background:#fff"></div>
<div class="abs" style="left:3px;top:395.9px;width:571px;height:46px;background:#f5f6f7"></div>
<div class="abs" style="left:3px;top:441.9px;width:571px;height:46px;background:#fff"></div>
<div class="abs" style="left:3px;top:487.9px;width:571px;height:46px;background:#f5f6f7"></div>
<div class="abs" style="left:3px;top:533.9px;width:571px;height:46px;background:#fff"></div>
<div class="abs" style="left:3px;top:579.9px;width:571px;height:46px;background:#f5f6f7"></div>
<div class="abs" style="left:3px;top:625.9px;width:571px;height:46px;background:#fff"></div>
<div class="abs" style="left:3px;top:671.9px;width:571px;height:46px;background:#f5f6f7"></div>
<div class="abs" style="left:3px;top:717.9px;width:571px;height:46px;background:#fff"></div>
<div class="abs" style="left:3px;top:763.9px;width:571px;height:46px;background:#f5f6f7"></div>
<div class="abs" style="left:3px;top:809.9px;width:571px;height:46px;background:#fff"></div>
<div class="abs" style="left:3px;top:856px;width:571px;height:70px;background:#fff;border-top:1px solid #dadde1"></div>
<div class="abs" style="left:574px;top:244px;width:5px;height:673px;background:linear-gradient(90deg,rgba(0,0,0,0.13),rgba(0,0,0,0))"></div>
<div class="vl" style="left:51px;top:244px;height:612px"></div>
<div class="vl" style="left:145px;top:244px;height:673px"></div>
<div class="abs" style="left:15px;top:314.9px;width:24px;height:24px;border:1px solid #cfd3d8;border-radius:4px;background:#fff"></div>
<div class="abs" style="left:80px;top:315.9px;width:38px;height:22px;border:1px solid #d3d6da;border-radius:11px;background:#fff"></div>
<div class="abs" style="left:83px;top:318.9px;width:16px;height:16px;border-radius:8px;background:#243645"></div>
<div class="t" style="left:154px;top:311.34px;font-size:13.8px;color:#3066a0;font-weight:400;">На фб ТЕСТ</div>
<div class="abs" style="left:15px;top:360.9px;width:24px;height:24px;border:1px solid #cfd3d8;border-radius:4px;background:#fff"></div>
<div class="abs" style="left:80px;top:361.9px;width:38px;height:22px;border:1px solid #d3d6da;border-radius:11px;background:#fff"></div>
<div class="abs" style="left:83px;top:364.9px;width:16px;height:16px;border-radius:8px;background:#243645"></div>
<div class="t" style="left:154px;top:357.34px;font-size:13.8px;color:#3066a0;font-weight:400;">Для организаторов — максимум охват</div>
<div class="abs" style="left:15px;top:406.9px;width:24px;height:24px;border:1px solid #cfd3d8;border-radius:4px;background:#fff"></div>
<div class="abs" style="left:80px;top:407.9px;width:38px;height:22px;border:1px solid #d3d6da;border-radius:11px;background:#fff"></div>
<div class="abs" style="left:83px;top:410.9px;width:16px;height:16px;border-radius:8px;background:#243645"></div>
<div class="t" style="left:154px;top:403.34px;font-size:13.8px;color:#3066a0;font-weight:400;">Для организаторов</div>
<div class="abs" style="left:15px;top:452.9px;width:24px;height:24px;border:1px solid #cfd3d8;border-radius:4px;background:#fff"></div>
<div class="abs" style="left:80px;top:453.9px;width:38px;height:22px;border:1px solid #d3d6da;border-radius:11px;background:#fff"></div>
<div class="abs" style="left:83px;top:456.9px;width:16px;height:16px;border-radius:8px;background:#243645"></div>
<div class="t" style="left:154px;top:449.34px;font-size:13.8px;color:#3066a0;font-weight:400;">Instagram објава: <span style="display:inline-block;position:relative;width:16px;height:1px;margin:0 1px 0 -1px"><svg style="position:absolute;left:0;top:-12px" width="16" height="16" viewBox="0 0 16 16"><path d="M10.6 0.9L1.2 8.6H6.4L4.6 15.2L14.6 6.6H9.4Z" fill="#f5c344" stroke="#1c1c1c" stroke-width="1.4" stroke-linejoin="round"/></svg></span>Масштабный РОЗЫГРЫШ от Афиши...</div>
<div class="abs" style="left:15px;top:498.9px;width:24px;height:24px;border:1px solid #cfd3d8;border-radius:4px;background:#fff"></div>
<div class="abs" style="left:80px;top:499.9px;width:38px;height:22px;border:1px solid #d3d6da;border-radius:11px;background:#fff"></div>
<div class="abs" style="left:83px;top:502.9px;width:16px;height:16px;border-radius:8px;background:#243645"></div>
<div class="t" style="left:154px;top:495.34px;font-size:13.8px;color:#3066a0;font-weight:400;">Instagram објава: Страшный сон <span style="display:inline-block;position:relative;width:17px;height:1px;margin:0 2px 0 1px"><svg style="position:absolute;left:0;top:-13px" width="17" height="17" viewBox="0 0 17 17"><circle cx="8.5" cy="8.8" r="7.4" fill="#f6c443" stroke="#3a3a3a" stroke-width="1.1"/><path d="M4.6 9.4Q8.5 15.2 12.4 9.4Z" fill="#3a3a3a"/><path d="M5.2 10.2H11.8L11.2 11.4H5.8Z" fill="#fff"/><path d="M4.4 7.2Q5.6 5.6 6.8 7.2M10.2 7.2Q11.4 5.6 12.6 7.2" fill="none" stroke="#3a3a3a" stroke-width="1.1"/><path d="M13.4 0.8Q16.2 3.8 14.6 5.4Q12.4 5.8 13.4 0.8Z" fill="#5aa9e6" stroke="#2d6fa8" stroke-width="0.6"/></svg></span> Интересные...</div>
<div class="abs" style="left:15px;top:544.9px;width:24px;height:24px;border:1px solid #cfd3d8;border-radius:4px;background:#fff"></div>
<div class="abs" style="left:80px;top:545.9px;width:38px;height:22px;border:1px solid #d3d6da;border-radius:11px;background:#fff"></div>
<div class="abs" style="left:83px;top:548.9px;width:16px;height:16px;border-radius:8px;background:#243645"></div>
<div class="t" style="left:154px;top:541.34px;font-size:13.8px;color:#3066a0;font-weight:400;">Вторая настройка - "Вовлеченность" ФИНАЛ ЗАПУСК</div>
<div class="abs" style="left:15px;top:590.9px;width:24px;height:24px;border:1px solid #cfd3d8;border-radius:4px;background:#fff"></div>
<div class="abs" style="left:80px;top:591.9px;width:38px;height:22px;border:1px solid #d3d6da;border-radius:11px;background:#fff"></div>
<div class="abs" style="left:83px;top:594.9px;width:16px;height:16px;border-radius:8px;background:#243645"></div>
<div class="t" style="left:154px;top:587.34px;font-size:13.8px;color:#3066a0;font-weight:400;">Запуск ads manager рилсов</div>
<div class="abs" style="left:15px;top:636.9px;width:24px;height:24px;border:1px solid #cfd3d8;border-radius:4px;background:#fff"></div>
<div class="abs" style="left:80px;top:637.9px;width:38px;height:22px;border:1px solid #d3d6da;border-radius:11px;background:#fff"></div>
<div class="abs" style="left:83px;top:640.9px;width:16px;height:16px;border-radius:8px;background:#243645"></div>
<div class="t" style="left:154px;top:633.34px;font-size:13.8px;color:#3066a0;font-weight:400;">Instagram објава: Мероприятия Черногории...</div>
<div class="abs" style="left:15px;top:682.9px;width:24px;height:24px;border:1px solid #cfd3d8;border-radius:4px;background:#fff"></div>
<div class="abs" style="left:80px;top:683.9px;width:38px;height:22px;border:1px solid #d3d6da;border-radius:11px;background:#fff"></div>
<div class="abs" style="left:83px;top:686.9px;width:16px;height:16px;border-radius:8px;background:#243645"></div>
<div class="t" style="left:154px;top:679.34px;font-size:13.8px;color:#3066a0;font-weight:400;">Instagram објава: Все события Черногории в одном...</div>
<div class="abs" style="left:15px;top:728.9px;width:24px;height:24px;border:1px solid #cfd3d8;border-radius:4px;background:#fff"></div>
<div class="abs" style="left:80px;top:729.9px;width:38px;height:22px;border:1px solid #d3d6da;border-radius:11px;background:#fff"></div>
<div class="abs" style="left:83px;top:732.9px;width:16px;height:16px;border-radius:8px;background:#243645"></div>
<div class="t" style="left:154px;top:725.34px;font-size:13.8px;color:#3066a0;font-weight:400;">Instagram објава: Много и не нужно, когда есть...</div>
<div class="abs" style="left:15px;top:774.9px;width:24px;height:24px;border:1px solid #cfd3d8;border-radius:4px;background:#fff"></div>
<div class="abs" style="left:80px;top:775.9px;width:38px;height:22px;border:1px solid #d3d6da;border-radius:11px;background:#fff"></div>
<div class="abs" style="left:83px;top:778.9px;width:16px;height:16px;border-radius:8px;background:#243645"></div>
<div class="t" style="left:154px;top:771.34px;font-size:13.8px;color:#3066a0;font-weight:400;">Instagram објава: Все самые интересные ивенты...</div>
<div class="abs" style="left:15px;top:820.9px;width:24px;height:24px;border:1px solid #cfd3d8;border-radius:4px;background:#fff"></div>
<div class="abs" style="left:80px;top:821.9px;width:38px;height:22px;border:1px solid #d3d6da;border-radius:11px;background:#fff"></div>
<div class="abs" style="left:83px;top:824.9px;width:16px;height:16px;border-radius:8px;background:#243645"></div>
<div class="t" style="left:154px;top:817.34px;font-size:13.8px;color:#3066a0;font-weight:400;">Instagram post: Все события Черногории в одном...</div>
<div class="t" style="left:158px;top:866.44px;font-size:13.8px;color:#1c2b33;font-weight:400;">Результаты 15 кампаний <svg style="display:inline-block;vertical-align:-1px" width="12" height="12" viewBox="0 0 12 12"><circle cx="6" cy="6" r="6" fill="#1c2b33"/><rect x="5.1" y="5" width="1.8" height="4.6" fill="#fff"/><circle cx="6" cy="3.1" r="1.05" fill="#fff"/></svg></div>
<div class="t" style="left:158px;top:885.23px;font-size:12px;color:#858a8f;font-weight:400;">Удаленные объекты не включены</div>
<div class="abs" style="left:3px;top:293px;width:1800px;height:4px;background:linear-gradient(180deg,rgba(0,0,0,0.10),rgba(0,0,0,0))"></div>
<div class="abs" style="left:3px;top:244px;width:1800px;height:49px;background:#fff;border-top:1px solid #dadde1;border-bottom:1px solid #d4d7db"></div>
<div class="vl" style="left:51px;top:244px;height:48px"></div>
<div class="vl" style="left:145px;top:244px;height:48px"></div>
<div class="vl" style="left:629px;top:244px;height:48px"></div>
<div class="vl" style="left:731px;top:244px;height:48px"></div>
<div class="vl" style="left:851px;top:244px;height:48px"></div>
<div class="vl" style="left:965px;top:244px;height:48px"></div>
<div class="vl" style="left:1079px;top:244px;height:48px"></div>
<div class="vl" style="left:1198px;top:244px;height:48px"></div>
<div class="vl" style="left:1418px;top:244px;height:48px"></div>
<div class="vl" style="left:1661px;top:244px;height:48px"></div>
<div class="vl" style="left:1774px;top:244px;height:48px"></div>
<div class="abs" style="left:574px;top:244px;width:5px;height:48px;background:linear-gradient(90deg,rgba(0,0,0,0.13),rgba(0,0,0,0))"></div>
<div class="abs" style="left:15px;top:257px;width:24px;height:24px;border:1px solid #cfd3d8;border-radius:4px;background:#fff"></div>
<div class="t" style="left:62.5px;top:253.44px;font-size:13.8px;color:#1c2b33;font-weight:700;">Выкл./</div>
<div class="t" style="left:62.5px;top:272.44px;font-size:13.8px;color:#1c2b33;font-weight:700;">вкл.</div>
<div class="t" style="left:156.6px;top:261.44px;font-size:13.8px;color:#1c2b33;font-weight:700;">Кампания</div>
<div class="t" style="left:640.7px;top:262.44px;font-size:13.8px;color:#1c2b33;font-weight:700;">Бюджет</div>
<div class="t" style="left:742.5px;top:253.94px;font-size:13.8px;color:#1c2b33;font-weight:700;">Настройка</div>
<div class="t" style="left:742.5px;top:272.94px;font-size:13.8px;color:#1c2b33;font-weight:700;">атрибуции</div>
<svg class="abs" style="left:862px;top:253px" width="12" height="12" viewBox="0 0 12 12"><circle cx="6" cy="6" r="6" fill="#1877f2"/><rect x="5.1" y="5" width="1.8" height="4.6" fill="#fff"/><circle cx="6" cy="3.1" r="1.05" fill="#fff"/></svg>
<div class="t" style="left:862.7px;top:273.14px;font-size:13.2px;color:#1c2b33;font-weight:700;">Результат</div>
<div class="t" style="left:976px;top:261.44px;font-size:13.8px;color:#1c2b33;font-weight:700;">Охват</div>
<div class="t" style="left:1090.6px;top:261.44px;font-size:13.8px;color:#1c2b33;font-weight:700;">Показы</div>
<div class="t" style="left:1209.8px;top:261.54px;font-size:13.5px;color:#1c2b33;font-weight:700;">Цена за результат</div>
<div class="t" style="left:1429px;top:261.67px;font-size:13.1px;color:#1c2b33;font-weight:700;">Сумма затрат</div>
<div class="t" style="left:1672px;top:261.47px;font-size:13.7px;color:#1c2b33;font-weight:700;">Завершени</div>
<div class="caret" style="left:556px;top:267px;border-left-width:5px;border-right-width:5px;border-top-width:6px"></div>
<div class="caret" style="left:947.6px;top:267px;border-left-width:5px;border-right-width:5px;border-top-width:6px"></div>
<div class="caret" style="left:1061.7px;top:267px;border-left-width:5px;border-right-width:5px;border-top-width:6px"></div>
<div class="caret" style="left:1181px;top:267px;border-left-width:5px;border-right-width:5px;border-top-width:6px"></div>
<div class="caret" style="left:1401px;top:267px;border-left-width:5px;border-right-width:5px;border-top-width:6px"></div>
<div class="caret" style="left:1643.4px;top:267px;border-left-width:5px;border-right-width:5px;border-top-width:6px"></div>
<div class="caret" style="left:1756.7px;top:267px;border-left-width:5px;border-right-width:5px;border-top-width:6px"></div>
</body></html>
